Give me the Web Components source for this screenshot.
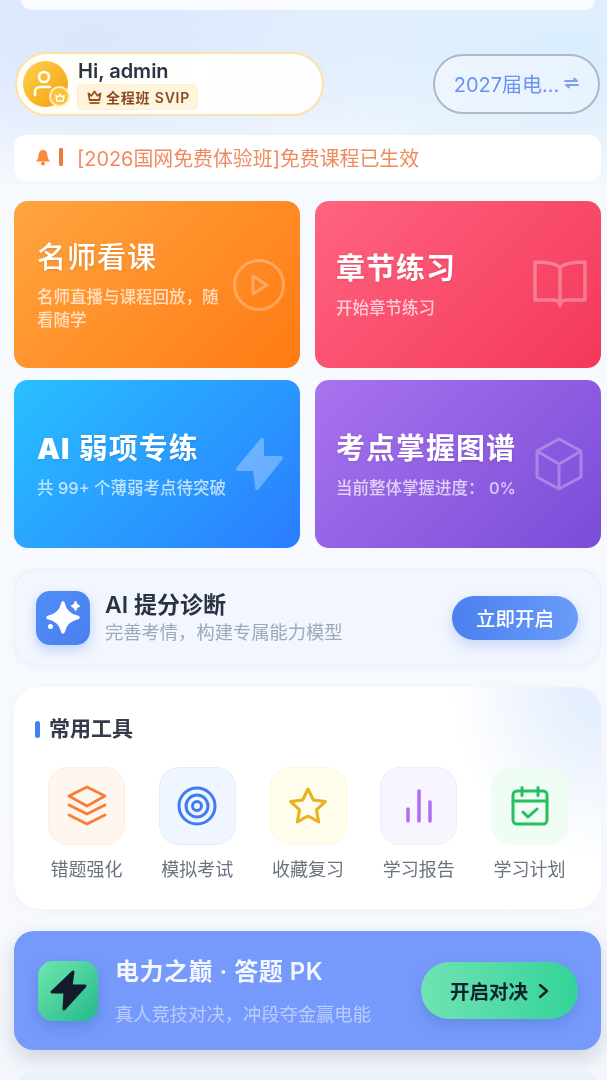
<!DOCTYPE html>
<html lang="zh">
<head>
<meta charset="utf-8">
<title>首页</title>
<style>
  html, body { margin: 0; height: 1080px; overflow: hidden; }
  body { font-family: Inter, "Noto Sans CJK SC", sans-serif; }
</style>
</head>
<body>
<app-home>
    <user-pill slot="header">
        <span slot="name">Hi, admin</span>
        <span slot="tag">全程班 SVIP</span>
    </user-pill>
    <exam-switch slot="header">2027届电...</exam-switch>
    <notice-bar slot="notice">[2026国网免费体验班]免费课程已生效</notice-bar>

    <feature-card slot="cards" style="--bg:linear-gradient(135deg,#ffa53f,#ff7a14);--tw:500">
        <span slot="title">名师看课</span>
        <span slot="sub">名师直播与课程回放，随看随学</span>
        <svg slot="icon" width="54" height="54" viewBox="0 0 54 54" fill="none" stroke="#fff" stroke-width="3" stroke-linejoin="round" opacity=".28"><circle cx="27" cy="27" r="24.5"/><path d="M21 18l14 9-14 9z"/></svg>
    </feature-card>
    <feature-card slot="cards" style="--bg:linear-gradient(135deg,#ff6480,#f4385a);--pad:21px">
        <span slot="title">章节练习</span>
        <span slot="sub">开始章节练习</span>
        <svg slot="icon" width="54" height="50" viewBox="0 0 54 50" fill="none" stroke="#fff" stroke-width="3.5" stroke-linejoin="round" opacity=".3"><path d="M27 8C23 3 14 2 2 2v38h18c4 0 7 2 7 6 0-4 3-6 7-6h18V2C40 2 31 3 27 8z"/><path d="M27 8v38"/></svg>
    </feature-card>
    <feature-card slot="cards" style="--bg:linear-gradient(135deg,#28c0ff,#2b7cff)">
        <span slot="title"><b>AI</b> 弱项专练</span>
        <span slot="sub">共 99+ 个薄弱考点待突破</span>
        <svg slot="icon" width="48" height="54" viewBox="0 0 48 54" fill="#fff" stroke="#fff" stroke-width="4" stroke-linejoin="round" opacity=".3" style="margin-right:3px"><path d="M27 3 3 32h17l2 19 24-30H27z"/></svg>
    </feature-card>
    <feature-card slot="cards" wide style="--bg:linear-gradient(135deg,#a873ee,#7a4cd8);--pad:21px;--ir:18px">
        <span slot="title">考点掌握图谱</span>
        <span slot="sub">当前整体掌握进度： 0%</span>
        <svg slot="icon" width="48" height="54" viewBox="0 0 48 54" fill="none" stroke="#fff" stroke-width="3" stroke-linejoin="round" opacity=".28"><path d="M24 2 46 14v26L24 52 2 40V14z"/><path d="M2 14l22 13 22-13M24 27v25"/></svg>
    </feature-card>

    <ai-banner slot="ai">
        <span slot="title">AI 提分诊断</span>
        <span slot="sub">完善考情，构建专属能力模型</span>
        <span slot="action">立即开启</span>
    </ai-banner>

    <tools-panel slot="tools">
        <span slot="title">常用工具</span>
        <tool-item style="--fill:#fff7ef;--line:#fdeede">
            <svg slot="icon" width="40" height="42" viewBox="0 0 40 42" fill="none" stroke="#f97d33" stroke-width="2.8" stroke-linejoin="round" stroke-linecap="round"><path d="M20 2 38 11 20 21 2 11z"/><path d="M2 20l18 9 18-9"/><path d="M2 30l18 9 18-9"/></svg>
            错题强化
        </tool-item>
        <tool-item style="--fill:#eff6ff;--line:#e3edfd">
            <svg slot="icon" width="40" height="40" viewBox="0 0 40 40" fill="none" stroke="#3f7cf0" stroke-width="3"><circle cx="20" cy="20" r="18"/><circle cx="20" cy="20" r="11"/><circle cx="20" cy="20" r="4.5"/></svg>
            模拟考试
        </tool-item>
        <tool-item style="--fill:#fffdeb;--line:#fdf8d8">
            <svg slot="icon" width="40" height="40" viewBox="0 0 40 40" fill="none" stroke="#eab01f" stroke-width="3" stroke-linejoin="round"><path d="M20 3l5.300 11 12 1.600-8.800 8.300 2.200 12L20 30l-10.700 5.900 2.200-12-8.800-8.300 12-1.600z"/></svg>
            收藏复习
        </tool-item>
        <tool-item style="--fill:#f8f5ff;--line:#f1ecfd">
            <svg slot="icon" width="30" height="34" viewBox="0 0 30 34" fill="none" stroke="#b06cf5" stroke-width="3.5" stroke-linecap="round"><path d="M4 20v12M15 2v30M26 13v19"/></svg>
            学习报告
        </tool-item>
        <tool-item style="--fill:#f0fdf4;--line:#f0fcf3">
            <svg slot="icon" width="40" height="40" viewBox="0 0 40 40" fill="none" stroke="#22c15e" stroke-width="3" stroke-linecap="round" stroke-linejoin="round"><rect x="3" y="5" width="34" height="33" rx="4"/><path d="M3 15h34M12 1.500v8M28 1.500v8M13 26l5 5 9-8"/></svg>
            学习计划
        </tool-item>
    </tools-panel>

    <pk-banner slot="pk">
        <span slot="title">电力之巅 · 答题 PK</span>
        <span slot="sub">真人竞技对决，冲段夺金赢电能</span>
        <span slot="action">开启对决</span>
    </pk-banner>
</app-home>
<script>
const FONT = `Inter, "Noto Sans CJK SC", sans-serif`;

class UserPill extends HTMLElement {
    constructor() {
        super();
        this.attachShadow({ mode: 'open' });
        this.shadowRoot.innerHTML = `
            <style>
                :host {
                    box-sizing: border-box;
                    display: flex;
                    align-items: center;
                    width: 309px;
                    height: 64px;
                    padding: 0 0 0 6px;
                    gap: 10px;
                    border: 2px solid #fbe3a6;
                    border-radius: 32px;
                    background: linear-gradient(90deg, #fffdf5, #ffffff 60%, #fdfdff);
                    font-family: ${FONT};
                }
                .avatar {
                    position: relative;
                    width: 45px;
                    height: 46px;
                    border-radius: 50%;
                    background: linear-gradient(135deg, #fcd34d, #f59e0b);
                    flex: none;
                }
                .avatar > svg { position: absolute; left: 9px; top: 8px; }
                .mini {
                    position: absolute;
                    right: -2px;
                    bottom: 0;
                    width: 21px;
                    height: 21px;
                    box-sizing: border-box;
                    border: 2px solid #fdeec6;
                    border-radius: 50%;
                    background: #fbc23c;
                    display: flex;
                    align-items: center;
                    justify-content: center;
                }
                .name { font-size: 20px; line-height: 24px; font-weight: 600; color: #2b3345; }
                .tag {
                    display: inline-flex;
                    align-items: center;
                    gap: 3px;
                    height: 24px;
                    padding: 0 7px 0 8px;
                    margin: 1px 0 0 -1px;
                    border-radius: 5px;
                    border: 1px solid #fdf0cf;
                    background: #fff4dc;
                    color: #8a4b23;
                    font-size: 14px;
                    font-weight: 600;
                    letter-spacing: .8px;
                }
                .col { display: flex; flex-direction: column; align-items: flex-start; }
            </style>
            <div class="avatar">
                <svg width="26" height="30" viewBox="0 0 26 30" fill="none" stroke="#fff" stroke-width="2.6" stroke-linecap="round">
                    <circle cx="12" cy="8" r="5"/>
                    <path d="M3 26v-3c0-3 2-5 5-5h10"/>
                </svg>
                <span class="mini">
                    <svg width="12" height="12" viewBox="0 0 12 12" fill="none" stroke="#fff" stroke-width="1.4" stroke-linejoin="round"><path d="M2 4.500l2.500 1.500L6 3l1.500 3L10 4.500 9.200 10H2.800z"/></svg>
                </span>
            </div>
            <div class="col">
                <div class="name"><slot name="name"></slot></div>
                <div class="tag">
                    <svg width="17" height="17" viewBox="0 0 17 17" fill="none" stroke="#9a4f1f" stroke-width="1.8" stroke-linejoin="round"><path d="M2.500 5.500l3 2.200L8.500 3.500l3 4.200 3-2.200-1.200 6.500H3.700z"/><path d="M3.500 15h10"/></svg>
                    <slot name="tag"></slot>
                </div>
            </div>
        `;
    }
}

class ExamSwitch extends HTMLElement {
    constructor() {
        super();
        this.attachShadow({ mode: 'open' });
        this.shadowRoot.innerHTML = `
            <style>
                :host {
                    box-sizing: border-box;
                    display: flex;
                    align-items: center;
                    justify-content: center;
                    gap: 5px;
                    width: 167px;
                    height: 60px;
                    margin-right: 1px;
                    padding-bottom: 2px;
                    border: 2px solid #adb8c8;
                    border-radius: 30px;
                    background: linear-gradient(90deg, #eef5fe, #e7f3fd);
                    color: #6a92f2;
                    font-family: ${FONT};
                    font-size: 20px;
                }
            </style>
            <slot></slot>
            <svg width="15" height="12" viewBox="0 0 15 12" fill="none" stroke="#7d9df0" stroke-width="1.8" stroke-linecap="round" stroke-linejoin="round"><path d="M1 4h12L10 1.500"/><path d="M14 8H2l3 2.500"/></svg>
        `;
    }
}

class NoticeBar extends HTMLElement {
    constructor() {
        super();
        this.attachShadow({ mode: 'open' });
        this.shadowRoot.innerHTML = `
            <style>
                :host {
                    box-sizing: border-box;
                    display: flex;
                    align-items: center;
                    height: 46px;
                    margin-top: 19px;
                    padding: 0 0 2px 21px;
                    background: #fff;
                    border-radius: 12px;
                    color: #ef8a5f;
                    font-family: ${FONT};
                    font-size: 19.9px;
                }
                .bar { width: 4px; height: 18px; margin: 0 14px 0 8px; background: #f07c3c; border-radius: 1px; }
            </style>
            <svg width="16" height="17" viewBox="0 0 16 17"><path fill="#f98a3c" d="M8 1c3 0 4.500 2.500 4.500 5.500 0 2.500 1 4 2.500 6H1c1.500-2 2.500-3.500 2.500-6C3.500 3.500 5 1 8 1z"/><circle cx="8" cy="14.500" r="2" fill="#f98a3c"/></svg>
            <span class="bar"></span>
            <slot></slot>
        `;
    }
}

class FeatureCard extends HTMLElement {
    constructor() {
        super();
        this.attachShadow({ mode: 'open' });
        this.shadowRoot.innerHTML = `
            <style>
                :host {
                    box-sizing: border-box;
                    position: relative;
                    display: flex;
                    flex-direction: column;
                    justify-content: center;
                    padding: 0 72px 0 var(--pad, 23px);
                    border-radius: 14px;
                    background: var(--bg);
                    color: #fff;
                    font-family: ${FONT};
                    overflow: hidden;
                }
                :host([wide]) { padding-right: 14px; }
                .title {
                    font-size: 29px;
                    line-height: 40px;
                    font-weight: var(--tw, 600);
                    letter-spacing: 1px;
                    white-space: nowrap;
                    text-shadow: 0 1px 3px rgba(0,0,0,.12);
                }
                .sub {
                    margin-top: 8px;
                    font-size: 16.5px;
                    font-weight: 500;
                    line-height: 23px;
                    color: rgba(255,255,255,.7);
                }
                .icon { position: absolute; right: var(--ir, 14px); top: 50%; transform: translateY(-50%); display: flex; }
            </style>
            <div class="title"><slot name="title"></slot></div>
            <div class="sub"><slot name="sub"></slot></div>
            <div class="icon"><slot name="icon"></slot></div>
        `;
    }
}

class AiBanner extends HTMLElement {
    constructor() {
        super();
        this.attachShadow({ mode: 'open' });
        this.shadowRoot.innerHTML = `
            <style>
                :host {
                    box-sizing: border-box;
                    display: flex;
                    align-items: center;
                    height: 97px;
                    margin-top: 21px;
                    padding: 0 21px;
                    gap: 15px;
                    border: 1px solid #e8effb;
                    border-radius: 22px;
                    background: #f2f6fe;
                    font-family: ${FONT};
                    box-shadow: 0 2px 10px rgba(120,150,220,.06);
                }
                .logo {
                    width: 54px;
                    height: 54px;
                    flex: none;
                    border-radius: 14px;
                    background: linear-gradient(135deg, #4f8ef7, #4a80f0);
                    box-shadow: 0 5px 12px rgba(74,128,240,.3);
                    display: flex;
                    align-items: center;
                    justify-content: center;
                }
                .text { flex: 1; }
                .title { font-size: 23px; line-height: 29px; font-weight: 600; color: #2a3244; }
                .sub { font-size: 18.3px; line-height: 25px; color: #a0a9b8; }
                .btn {
                    width: 126px;
                    height: 44px;
                    border-radius: 22px;
                    background: linear-gradient(90deg, #4a80f0, #6a9cf8);
                    box-shadow: 0 6px 14px rgba(74,128,240,.25);
                    color: #fff;
                    font-size: 19.5px;
                    font-weight: 500;
                    display: flex;
                    align-items: center;
                    justify-content: center;
                    margin-right: 1px;
                }
            </style>
            <div class="logo">
                <svg width="40" height="40" viewBox="0 0 40 40" fill="#fff" stroke="#fff" stroke-linejoin="round">
                    <path stroke-width="3.5" d="M20 5Q22.500 17 35 19.500 22.500 22 20 34 17.500 22 5 19.500 17.500 17 20 5z"/>
                    <path stroke-width="2" d="M32.500 4c.3 2.400 1.200 3.600 3.500 4-2.300.4-3.200 1.600-3.500 4-.3-2.400-1.200-3.600-3.500-4 2.300-.4 3.200-1.600 3.500-4z"/>
                    <circle cx="7.500" cy="28.500" r="2.500" stroke="none"/>
                </svg>
            </div>
            <div class="text">
                <div class="title"><slot name="title"></slot></div>
                <div class="sub"><slot name="sub"></slot></div>
            </div>
            <div class="btn"><slot name="action"></slot></div>
        `;
    }
}

class ToolItem extends HTMLElement {
    constructor() {
        super();
        this.attachShadow({ mode: 'open' });
        this.shadowRoot.innerHTML = `
            <style>
                :host {
                    display: flex;
                    flex-direction: column;
                    align-items: center;
                    gap: 13px;
                    font-family: ${FONT};
                }
                .tile {
                    box-sizing: border-box;
                    width: 77px;
                    height: 78px;
                    border-radius: 20px;
                    border: 1.5px solid var(--line);
                    background: var(--fill);
                    display: flex;
                    align-items: center;
                    justify-content: center;
                }
                .label { font-size: 18px; line-height: 24px; color: #6b7280; white-space: nowrap; }
            </style>
            <div class="tile"><slot name="icon"></slot></div>
            <div class="label"><slot></slot></div>
        `;
    }
}

class ToolsPanel extends HTMLElement {
    constructor() {
        super();
        this.attachShadow({ mode: 'open' });
        this.shadowRoot.innerHTML = `
            <style>
                :host {
                    box-sizing: border-box;
                    display: block;
                    height: 222px;
                    margin-top: 21px;
                    padding: 27px 21px 0;
                    border-radius: 26px;
                    background:
                        radial-gradient(ellipse 150px 170px at 100% 0, #e4eefd 15%, rgba(255,255,255,0) 100%),
                        #fff;
                    font-family: ${FONT};
                    box-shadow: 0 2px 12px rgba(120,150,220,.06);
                }
                .head {
                    display: flex;
                    align-items: center;
                    gap: 9px;
                    font-size: 21px;
                    line-height: 30px;
                    font-weight: 600;
                    color: #333b4a;
                }
                .head i { width: 5px; height: 17px; border-radius: 3px; background: #3f83f8; }
                .row { display: flex; justify-content: space-between; margin: 23px 12px 0 13px; }
            </style>
            <div class="head"><i></i><slot name="title"></slot></div>
            <div class="row"><slot></slot></div>
        `;
    }
}

class PkBanner extends HTMLElement {
    constructor() {
        super();
        this.attachShadow({ mode: 'open' });
        this.shadowRoot.innerHTML = `
            <style>
                :host {
                    box-sizing: border-box;
                    display: flex;
                    align-items: center;
                    height: 119px;
                    margin-top: 22px;
                    padding: 0 23px 0 24px;
                    gap: 17px;
                    border-radius: 20px;
                    background: #769afb;
                    box-shadow: 0 8px 20px rgba(60,70,100,.2);
                    font-family: ${FONT};
                }
                .logo {
                    width: 60px;
                    height: 60px;
                    flex: none;
                    border-radius: 15px;
                    background: linear-gradient(135deg, #6ee7b0, #25b98a);
                    box-shadow: 0 6px 14px rgba(40,100,160,.3);
                    display: flex;
                    align-items: center;
                    justify-content: center;
                }
                .text { flex: 1; white-space: nowrap; padding-top: 2px; }
                .title { font-size: 24px; line-height: 30px; font-weight: 600; color: rgba(255,255,255,.92); letter-spacing: .5px; }
                .sub { margin-top: 15px; font-size: 18.3px; line-height: 24px; color: rgba(255,255,255,.5); }
                .btn {
                    width: 157px;
                    height: 57px;
                    flex: none;
                    border-radius: 29px;
                    background: linear-gradient(90deg, #70e3b2, #34d399);
                    box-shadow: 0 6px 14px rgba(40,100,160,.25);
                    color: #10202c;
                    font-size: 19.5px;
                    font-weight: 600;
                    display: flex;
                    align-items: center;
                    justify-content: center;
                    gap: 10px;
                }
            </style>
            <div class="logo">
                <svg width="60" height="60" viewBox="0 0 60 60"><path fill="#121a2b" stroke="#121a2b" stroke-width="3" stroke-linejoin="round" d="M35 11 14 31h13l-1 17 21-23H33z"/></svg>
            </div>
            <div class="text">
                <div class="title"><slot name="title"></slot></div>
                <div class="sub"><slot name="sub"></slot></div>
            </div>
            <div class="btn">
                <slot name="action"></slot>
                <svg width="11" height="16" viewBox="0 0 11 16" fill="none" stroke="#10202c" stroke-width="2.4" stroke-linecap="round" stroke-linejoin="round"><path d="M2 2l7 6-7 6"/></svg>
            </div>
        `;
    }
}

class AppHome extends HTMLElement {
    constructor() {
        super();
        this.attachShadow({ mode: 'open' });
        this.shadowRoot.innerHTML = `
            <style>
                :host {
                    display: block;
                    box-sizing: border-box;
                    width: 607px;
                    height: 1080px;
                    overflow: hidden;
                    background:
                        radial-gradient(ellipse 340px 130px at 95% 60px, #d9eefd 0, rgba(217,238,253,0) 100%),
                        radial-gradient(ellipse 340px 150px at 15% 40px, #dbe6fd 0, rgba(219,230,253,0) 100%),
                        linear-gradient(180deg, #e6effd 0, #f6f9fe 190px, #f7f9fd 900px, #f3f6fb 100%);
                    font-family: ${FONT};
                    filter: blur(.7px);
                }
                .wrap { padding: 0 6px 0 14px; }
                .top { height: 10px; margin: 0 12px 0 21px; background: #f8fbff; border-radius: 0 0 16px 16px; }
                .header { display: flex; justify-content: space-between; align-items: center; margin: 42px 0 0 1px; }
                .grid {
                    display: grid;
                    grid-template-columns: 286px 286px;
                    grid-template-rows: 167px 168px;
                    column-gap: 15px;
                    row-gap: 12px;
                    margin-top: 20px;
                }
                .next { height: 30px; margin: 20px 4px 0; background: #e9f1fd; border-radius: 16px 16px 0 0; }
            </style>
            <div class="top"></div>
            <div class="wrap">
                <div class="header"><slot name="header"></slot></div>
                <slot name="notice"></slot>
                <div class="grid"><slot name="cards"></slot></div>
                <slot name="ai"></slot>
                <slot name="tools"></slot>
                <slot name="pk"></slot>
                <div class="next"></div>
            </div>
        `;
    }
}

customElements.define('user-pill', UserPill);
customElements.define('exam-switch', ExamSwitch);
customElements.define('notice-bar', NoticeBar);
customElements.define('feature-card', FeatureCard);
customElements.define('ai-banner', AiBanner);
customElements.define('tool-item', ToolItem);
customElements.define('tools-panel', ToolsPanel);
customElements.define('pk-banner', PkBanner);
customElements.define('app-home', AppHome);
</script>
</body>
</html>
